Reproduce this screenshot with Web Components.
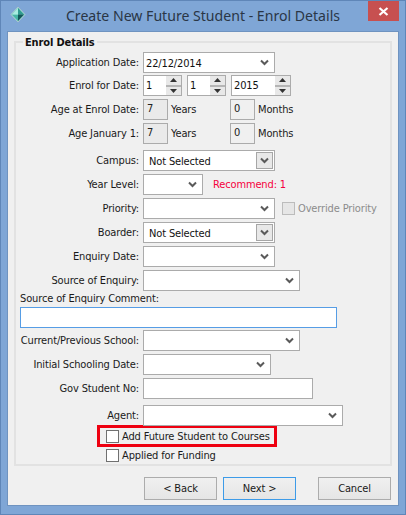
<!DOCTYPE html>
<html>
<head>
<meta charset="utf-8">
<title>Create New Future Student - Enrol Details</title>
<style>
html,body{margin:0;padding:0;background:#7fa6d6;}
body{font:11px "DejaVu Sans",Verdana,sans-serif;font-stretch:condensed;letter-spacing:-.14px;color:#1a1a1a;}
</style>
</head>
<body>
<win-frame>
  <title-bar slot="title">Create New Future Student - Enrol Details</title-bar>
  <group-box legend="Enrol Details">
    <form-row label="Application Date:"><combo-box w="132" value="22/12/2014" vx="2"></combo-box></form-row>
    <form-row label="Enrol for Date:" gap="2">
      <spin-box w="39" value="1"></spin-box><spin-box w="39" value="1"></spin-box><spin-box w="60" value="2015"></spin-box>
    </form-row>
    <form-row label="Age at Enrol Date:" gap="3">
      <age-field value="7" unit="Years" shade></age-field><age-field value="0" unit="Months"></age-field>
    </form-row>
    <form-row label="Age January 1:" gap="3">
      <age-field value="7" unit="Years" shade></age-field><age-field value="0" unit="Months"></age-field>
    </form-row>
    <form-row label="Campus:" gap="6"><combo-box w="132" value="Not Selected" boxed></combo-box></form-row>
    <form-row label="Year Level:" gap="3">
      <combo-box w="60"></combo-box><span style="color:#f5003c;margin-left:5px">Recommend: 1</span>
    </form-row>
    <form-row label="Priority:" gap="3">
      <combo-box w="132"></combo-box><check-field disabled style="margin-left:2px">Override Priority</check-field>
    </form-row>
    <form-row label="Boarder:" gap="3"><combo-box w="132" value="Not Selected" boxed></combo-box></form-row>
    <form-row label="Enquiry Date:" gap="3"><combo-box w="132"></combo-box></form-row>
    <form-row label="Source of Enquiry:" gap="3"><combo-box w="157"></combo-box></form-row>
    <comment-field label="Source of Enquiry Comment:"></comment-field>
    <form-row label="Current/Previous School:" gap="2"><combo-box w="157"></combo-box></form-row>
    <form-row label="Initial Schooling Date:" gap="3"><combo-box w="128"></combo-box></form-row>
    <form-row label="Gov Student No:" gap="3"><text-field w="170"></text-field></form-row>
    <form-row label="Agent:" gap="6"><combo-box w="200"></combo-box></form-row>
    <highlight-box><check-field>Add Future Student to Courses</check-field></highlight-box>
    <check-field style="margin:2px 0 0 90px">Applied for Funding</check-field>
  </group-box>
  <button-bar>
    <push-button>&lt; Back</push-button>
    <push-button focused>Next &gt;</push-button>
    <push-button style="margin-left:16px">Cancel</push-button>
  </button-bar>
</win-frame>

<script>
class winFrame extends HTMLElement{
  constructor(){
    super()
    this.attachShadow({mode:"open"}).innerHTML=`<style>
    :host{display:block;width:406px;height:515px;box-sizing:border-box;background:#7fa6d6;overflow:hidden;
      box-shadow:inset 0 0 0 1px #5f86b8;}
    .panel{height:475px;box-sizing:border-box;margin:0 7px;background:#f0f0f0;border:1px solid #6f93c0;}
    </style>
    <slot name="title"></slot>
    <div class="panel"><slot></slot></div>`
  }
}

class titleBar extends HTMLElement{
  constructor(){
    super()
    this.attachShadow({mode:"open"}).innerHTML=`<style>
    :host{display:flex;height:31px;box-sizing:border-box;position:relative;align-items:center;justify-content:center;
      font:14.1px "Noto Sans",sans-serif;letter-spacing:0;color:#2a3646;padding:0 0 1px 0;}
    svg.icon{position:absolute;left:10px;top:6px;}
    .close{position:absolute;left:368px;top:1px;width:31px;height:20px;background:#c75050;display:flex;align-items:center;justify-content:center;}
    </style>
    <svg class="icon" width="16" height="17" viewBox="0 0 16 17">
      <path d="M8 1 15 8.5 8 16 1 8.5Z" fill="#7fd0c4" stroke="#a9c7cf" stroke-width="1"/>
      <path d="M8 2 14 8.5H8Z" fill="#2f9c90"/>
      <path d="M8 8.5H2L8 15Z" fill="#46b5a6"/>
      <path d="M8 8.5H14L8 15Z" fill="#14585a"/>
      <path d="M8 2 2 8.5H8Z" fill="#a8ece0"/>
    </svg>
    <slot></slot>
    <div class="close"><svg width="11" height="9" viewBox="0 0 11 9"><path d="M1.5 1 9.5 8M9.5 1 1.5 8" stroke="#fff" stroke-width="2.2" fill="none"/></svg></div>`
  }
}

class groupBox extends HTMLElement{
  constructor(){
    super()
    this.attachShadow({mode:"open"}).innerHTML=`<style>
    :host{display:block;position:relative;box-sizing:border-box;width:378px;margin:9px 0 0 6px;
      border:2px solid #e2e2e2;padding:9px 0 2px 0;}
    .legend{position:absolute;left:7px;top:-7px;padding:0 2px;background:#f0f0f0;font-weight:bold;color:#111;}
    </style>
    <div class="legend"></div>
    <slot></slot>`
  }
  connectedCallback(){
    this.shadowRoot.querySelector(".legend").textContent=this.getAttribute("legend")
  }
}

class formRow extends HTMLElement{
  constructor(){
    super()
    this.attachShadow({mode:"open"}).innerHTML=`<style>
    :host{display:flex;align-items:center;height:21px;}
    .lbl{width:123px;margin-right:4px;text-align:right;white-space:nowrap;flex:none;padding-bottom:1px;}
    .items{display:flex;align-items:center;gap:5px;}
    </style>
    <div class="lbl"></div>
    <div class="items"><slot></slot></div>`
  }
  connectedCallback(){
    this.shadowRoot.querySelector(".lbl").textContent=this.getAttribute("label")
    this.style.marginTop=(this.getAttribute("gap")||0)+"px"
  }
}

class comboBox extends HTMLElement{
  constructor(){
    super()
    this.attachShadow({mode:"open"}).innerHTML=`<style>
    :host{display:flex;align-items:center;height:21px;box-sizing:border-box;background:#fff;border:1px solid #ababab;flex:none;}
    .val{flex:1;padding-left:5px;padding-top:1px;white-space:nowrap;color:#111;}
    .arrow{width:17px;height:17px;margin-right:1px;box-sizing:border-box;display:flex;align-items:center;justify-content:center;}
    :host([boxed]) .arrow{background:#e8e8e8;border:1px solid #a6a6a6;}
    </style>
    <div class="val"></div>
    <div class="arrow"><svg width="9" height="7" viewBox="0 0 9 7"><path d="M1 1.5 4.5 5 8 1.5" stroke="#5a5a5a" stroke-width="2" fill="none"/></svg></div>`
  }
  connectedCallback(){
    this.style.width=this.getAttribute("w")+"px"
    this.shadowRoot.querySelector(".val").textContent=this.getAttribute("value")||""
    if(this.hasAttribute("vx")) this.shadowRoot.querySelector(".val").style.paddingLeft=this.getAttribute("vx")+"px"
  }
}

class spinBox extends HTMLElement{
  constructor(){
    super()
    this.attachShadow({mode:"open"}).innerHTML=`<style>
    :host{display:flex;height:21px;box-sizing:border-box;background:#fff;border:1px solid #ababab;flex:none;}
    .val{flex:1;padding-left:2px;line-height:20px;color:#111;}
    .btns{width:15px;margin:0;display:flex;flex-direction:column;background:#e8e8e8;}
    .btn{flex:1;display:flex;align-items:center;justify-content:center;}
    .btn+.btn{border-top:2px solid #b5b5b5;}
    </style>
    <div class="val"></div>
    <div class="btns">
      <div class="btn"><svg width="7" height="4" viewBox="0 0 7 4"><path d="M3.5 0 7 4H0Z" fill="#333"/></svg></div>
      <div class="btn"><svg width="7" height="4" viewBox="0 0 7 4"><path d="M0 0H7L3.5 4Z" fill="#333"/></svg></div>
    </div>`
  }
  connectedCallback(){
    this.style.width=this.getAttribute("w")+"px"
    this.shadowRoot.querySelector(".val").textContent=this.getAttribute("value")
  }
}

class ageField extends HTMLElement{
  constructor(){
    super()
    this.attachShadow({mode:"open"}).innerHTML=`<style>
    :host{display:flex;align-items:center;width:82px;flex:none;}
    .box{width:25px;height:21px;box-sizing:border-box;border:1px solid #ababab;padding-left:3px;line-height:17px;color:#222;margin-right:3px;}
    :host([shade]) .box{background:#eaeaea;}
    </style>
    <div class="box"></div><div class="unit"></div>`
  }
  connectedCallback(){
    this.shadowRoot.querySelector(".box").textContent=this.getAttribute("value")
    this.shadowRoot.querySelector(".unit").textContent=this.getAttribute("unit")
  }
}

class textField extends HTMLElement{
  constructor(){
    super()
    this.attachShadow({mode:"open"}).innerHTML=`<style>
    :host{display:block;height:21px;box-sizing:border-box;background:#fff;border:1px solid #ababab;flex:none;}
    </style>`
  }
  connectedCallback(){
    this.style.width=this.getAttribute("w")+"px"
  }
}

class commentField extends HTMLElement{
  constructor(){
    super()
    this.attachShadow({mode:"open"}).innerHTML=`<style>
    :host{display:block;margin-left:4px;}
    .lbl{height:16px;line-height:15px;}
    .inp{width:317px;height:21px;box-sizing:border-box;background:#fff;border:1px solid #569de5;}
    </style>
    <div class="lbl"></div><div class="inp"></div>`
  }
  connectedCallback(){
    this.shadowRoot.querySelector(".lbl").textContent=this.getAttribute("label")
  }
}

class checkField extends HTMLElement{
  constructor(){
    super()
    this.attachShadow({mode:"open"}).innerHTML=`<style>
    :host{display:flex;align-items:center;gap:3px;height:13px;white-space:nowrap;}
    .box{width:13px;height:13px;box-sizing:border-box;background:#fff;border:1px solid #707070;flex:none;}
    :host([disabled]){color:#8c8c8c;}
    :host([disabled]) .box{background:#e6e6e6;border-color:#bcbcbc;}
    </style>
    <div class="box"></div><slot></slot>`
  }
}

class highlightBox extends HTMLElement{
  constructor(){
    super()
    this.attachShadow({mode:"open"}).innerHTML=`<style>
    :host{display:block;box-sizing:border-box;width:180px;height:22px;margin:-1px 0 0 81px;border:3px solid #ee0010;padding:2px 0 0 6px;}
    </style>
    <slot></slot>`
  }
}

class buttonBar extends HTMLElement{
  constructor(){
    super()
    this.attachShadow({mode:"open"}).innerHTML=`<style>
    :host{display:flex;justify-content:flex-end;gap:6px;margin-top:11px;padding-right:7px;}
    </style>
    <slot></slot>`
  }
}

class pushButton extends HTMLElement{
  constructor(){
    super()
    this.attachShadow({mode:"open"}).innerHTML=`<style>
    :host{display:flex;align-items:center;justify-content:center;width:73px;height:23px;box-sizing:border-box;
      border:1px solid #acacac;background:linear-gradient(#f0f0f0,#e5e5e5);color:#1a1a1a;}
    :host([focused]){border-color:#3d9be8;}
    </style>
    <slot></slot>`
  }
}

customElements.define("win-frame",winFrame)
customElements.define("title-bar",titleBar)
customElements.define("group-box",groupBox)
customElements.define("form-row",formRow)
customElements.define("combo-box",comboBox)
customElements.define("spin-box",spinBox)
customElements.define("age-field",ageField)
customElements.define("text-field",textField)
customElements.define("comment-field",commentField)
customElements.define("check-field",checkField)
customElements.define("highlight-box",highlightBox)
customElements.define("button-bar",buttonBar)
customElements.define("push-button",pushButton)
</script>
</body>
</html>
